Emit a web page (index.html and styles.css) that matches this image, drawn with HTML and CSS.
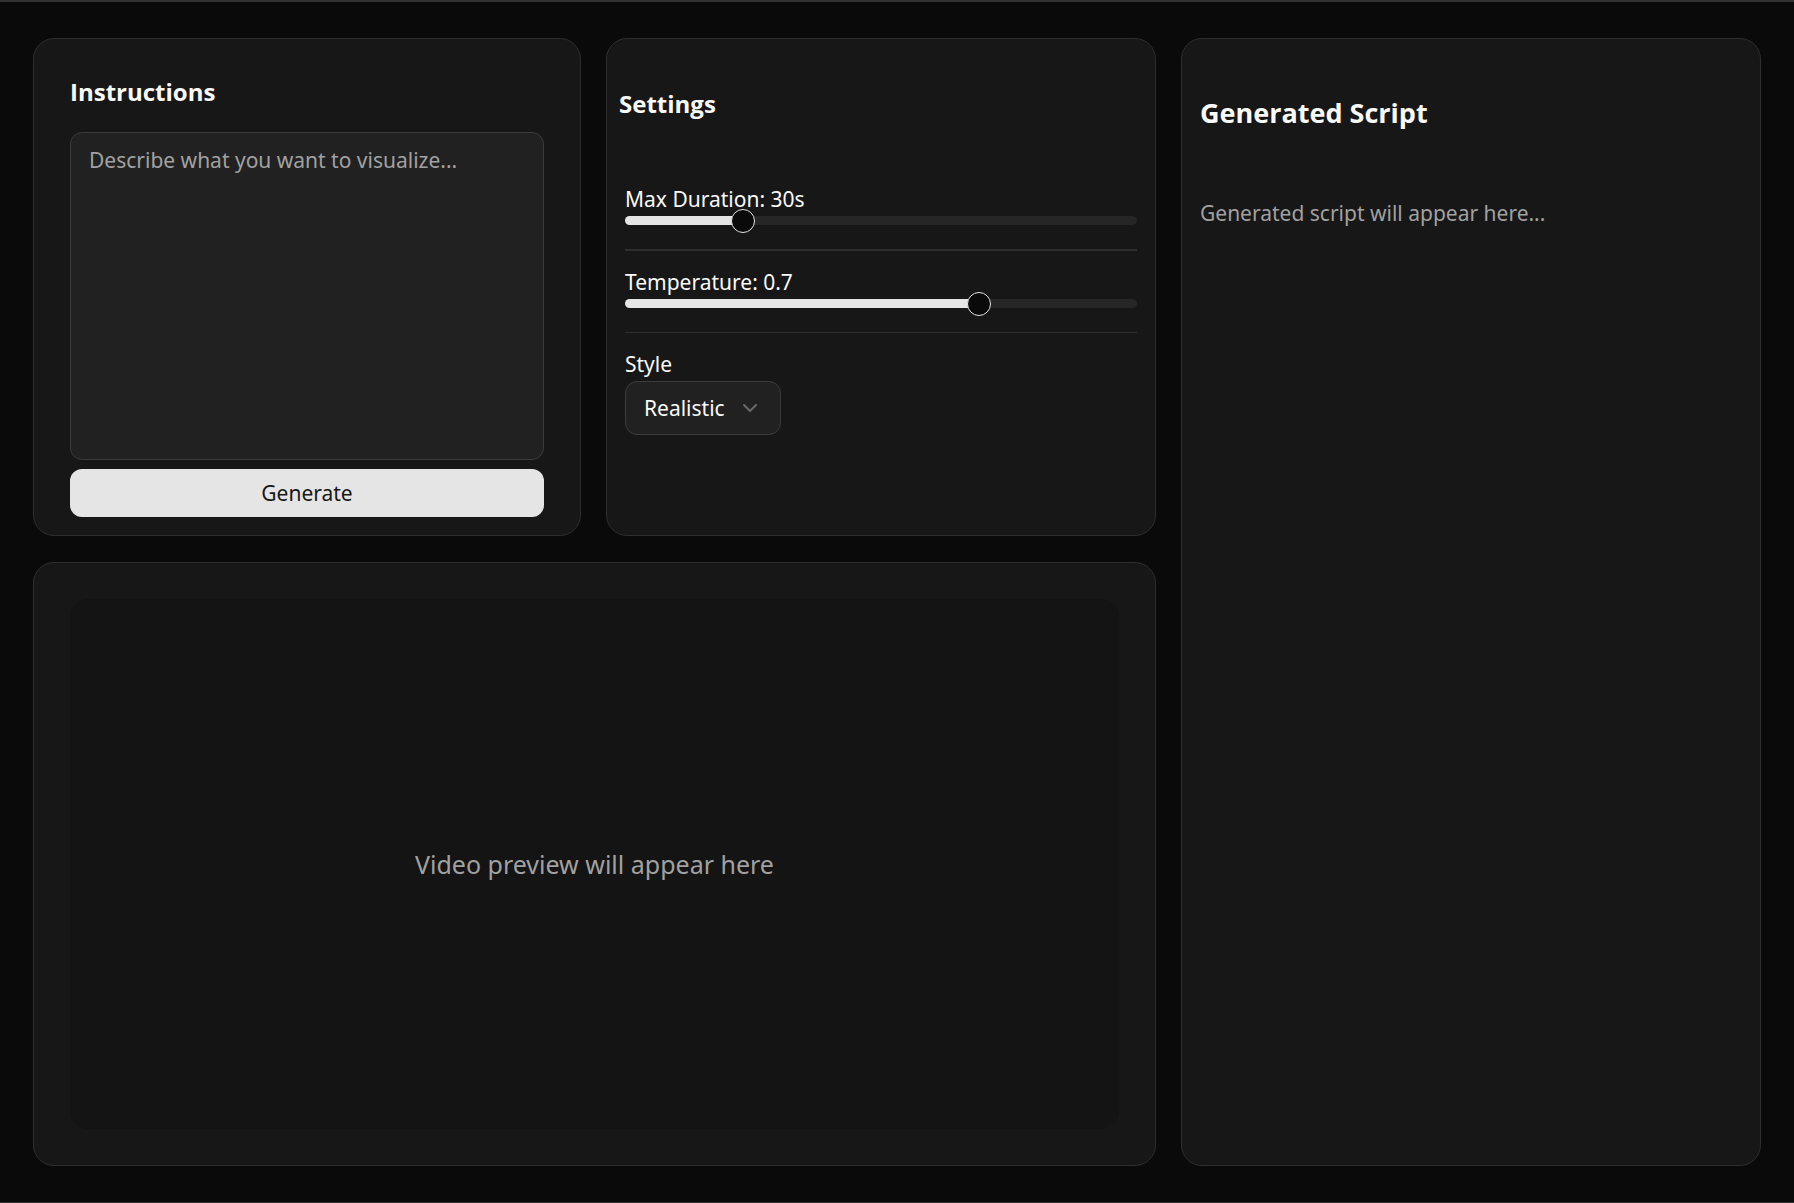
FILE: index.html
```html
<!DOCTYPE html>
<html lang="en">
<head>
<meta charset="utf-8">
<meta name="viewport" content="width=device-width, initial-scale=1">
<title>Video generator</title>
<link rel="stylesheet" href="styles.css">
</head>
<body>
<main class="workspace">
  <form class="card instructions">
    <h2 class="title"><label for="prompt">Instructions</label></h2>
    <textarea class="prompt" id="prompt" placeholder="Describe what you want to visualize..."></textarea>
    <button class="generate" type="button">Generate</button>
  </form>

  <section class="card settings">
    <h2 class="title">Settings</h2>
    <div class="fields">
      <div class="field">
        <label for="duration">Max Duration: 30s</label>
        <input class="slider" id="duration" type="range" min="5" max="120" value="30" style="--ratio: 0.217">
      </div>
      <hr class="divider divider-strong">
      <div class="field">
        <label for="temperature">Temperature: 0.7</label>
        <input class="slider" id="temperature" type="range" min="0" max="1" step="0.1" value="0.7" style="--ratio: 0.7">
      </div>
      <hr class="divider">
      <div class="field">
        <label for="style">Style</label>
        <div class="picker">
          <select class="picker-select" id="style"><option>Realistic</option></select>
          <svg class="picker-icon" viewBox="0 0 24 24" aria-hidden="true"><path d="m6 9 6 6 6-6"/></svg>
        </div>
      </div>
    </div>
  </section>

  <section class="card script">
    <h2 class="title title-large">Generated Script</h2>
    <p class="hint">Generated script will appear here...</p>
  </section>

  <section class="card preview">
    <div class="stage">Video preview will appear here</div>
  </section>
</main>
</body>
</html>
```
FILE: styles.css
```css
*,
*::before,
*::after {
  box-sizing: border-box;
}

body {
  margin: 0;
  background: #0a0a0a;
  color: #fafafa;
  font: 21px/30px "Noto Sans", "Open Sans", sans-serif;
}

.workspace {
  display: grid;
  grid-template-columns: 548fr 550fr 580fr;
  grid-template-rows: 498fr 604fr;
  gap: 26px 25px;
  min-height: 100vh;
  padding: 36px 33px;
  border-top: 2px solid #333;
  border-bottom: 1px solid #2e2e2e;
}

.card {
  display: flex;
  flex-direction: column;
  min-width: 0;
  border: 1px solid #2e2e2e;
  border-radius: 21px;
  background: #171717;
}

.title {
  margin: 0;
  font-family: "Open Sans", "Noto Sans", sans-serif;
  font-size: 24px;
  font-weight: 700;
  line-height: 34px;
}

.title-large {
  font-size: 27px;
  line-height: 36px;
}

.instructions {
  padding: 36px 36px 18px;
}

.prompt {
  flex: 1;
  width: 100%;
  margin: 23px 0 9px;
  padding: 12px 18px;
  border: 1px solid #3c3c3c;
  border-radius: 12px;
  background: #212121;
  color: inherit;
  font: inherit;
  resize: none;
}

.prompt::placeholder {
  color: #a1a1a1;
  opacity: 1;
}

.generate {
  height: 48px;
  border: 0;
  border-radius: 12px;
  background: #e5e5e5;
  color: #171717;
  font: inherit;
}

.settings {
  padding: 48px 18px 18px;
}

.settings .title {
  margin-left: -6px;
}

.fields {
  display: flex;
  flex-direction: column;
  gap: 16px;
  margin-top: 63px;
}

.field {
  display: flex;
  flex-direction: column;
  align-items: flex-start;
  gap: 2px;
}

.slider {
  appearance: none;
  width: 100%;
  height: 9px;
  margin: 0 0 8px;
  border-radius: 5px;
  background: linear-gradient(#e5e5e5, #e5e5e5) 0 0 / calc(12px + (100% - 24px) * var(--ratio)) 100% no-repeat #262626;
}

.slider::-webkit-slider-thumb {
  appearance: none;
  width: 24px;
  height: 24px;
  border: 1px solid #e5e5e5;
  border-radius: 50%;
  background: #0a0a0a;
}

.divider {
  width: 100%;
  height: 1px;
  margin: 0;
  border: 0;
  background: #2e2e2e;
}

.divider-strong {
  height: 2px;
}

.picker {
  display: grid;
  align-items: center;
}

.picker > * {
  grid-area: 1 / 1;
}

.picker-select {
  appearance: none;
  height: 54px;
  padding: 0 55px 0 18px;
  border: 1px solid #3c3c3c;
  border-radius: 12px;
  background: #212121;
  color: inherit;
  font: inherit;
}

.picker-icon {
  justify-self: end;
  width: 24px;
  margin-right: 19px;
  fill: none;
  stroke: #6a6a6a;
  stroke-width: 2;
  stroke-linecap: round;
  stroke-linejoin: round;
  pointer-events: none;
}

.script {
  grid-row: 1 / 3;
  grid-column: 3;
  padding: 56px 18px;
}

.hint {
  margin: 67px 0 0;
  color: #a1a1a1;
}

.preview {
  grid-column: 1 / 3;
  padding: 36px;
}

.stage {
  display: flex;
  flex: 1;
  align-items: center;
  justify-content: center;
  border-radius: 18px;
  background: #141414;
  color: #a1a1a1;
  font-size: 25px;
}
```
